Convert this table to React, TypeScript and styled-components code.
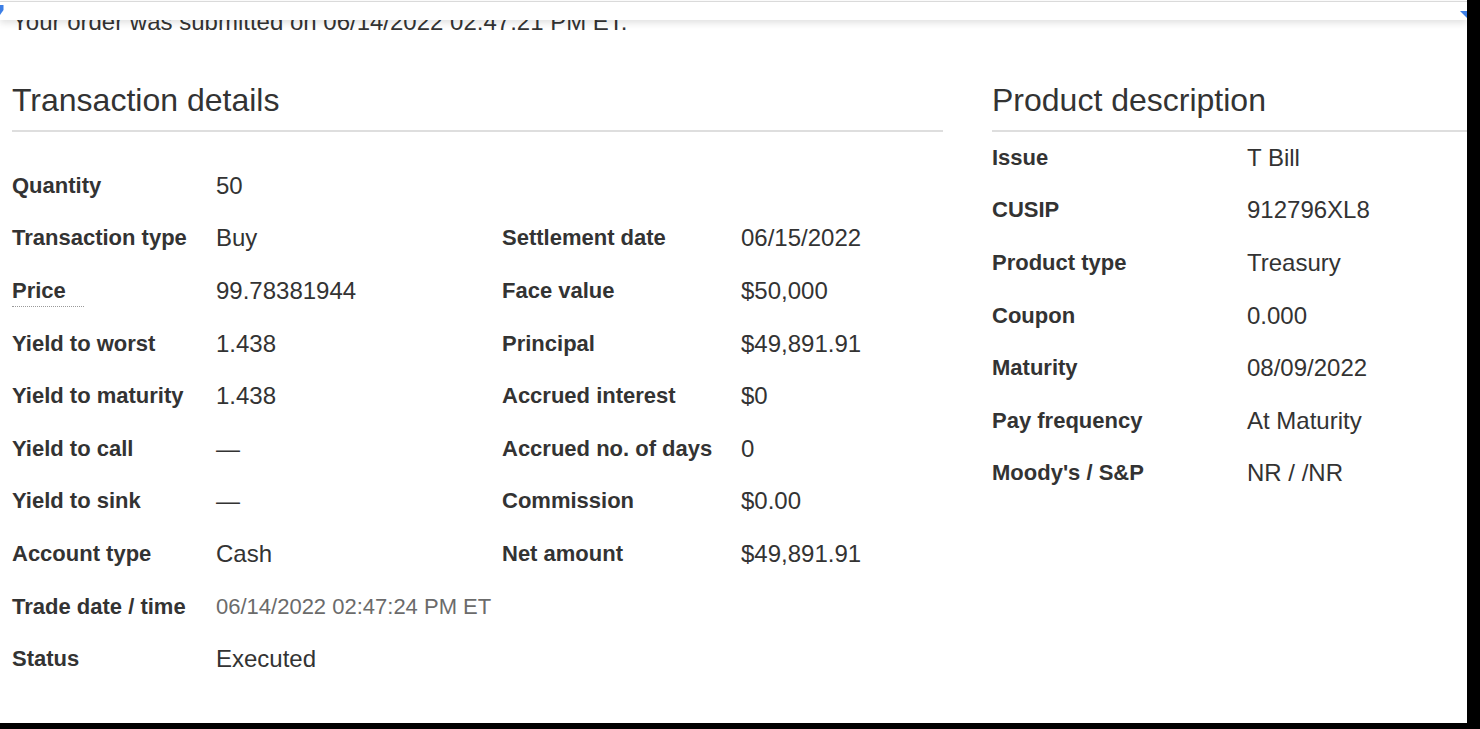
import React from "react";
import styled, { createGlobalStyle } from "styled-components";

const GlobalStyle = createGlobalStyle`
  html, body {
    margin: 0;
    padding: 0;
    background: #000;
  }
  body {
    font-family: "Liberation Sans", Arial, Helvetica, sans-serif;
    color: #333;
  }
`;

const Frame = styled.div`
  position: relative;
  width: 1467px;
  height: 723px;
  background: #fff;
  overflow: hidden;
`;

const TopBar = styled.div`
  position: absolute;
  top: 1px;
  left: 0;
  right: 0;
  height: 18px;
  background: #fff;
  border-top: 1px solid #dadada;
  box-shadow: 0 3px 7px rgba(0, 0, 0, 0.12);
  z-index: 2;
`;

const Marker = styled.svg<{ $side: "left" | "right" }>`
  position: absolute;
  ${(p) => (p.$side === "left" ? "left: 0; top: 3px;" : "right: 0; top: 9px;")}
`;

const Page = styled.div`
  padding: 8px 0 0 12px;
`;

const Intro = styled.p`
  margin: 0;
  font-size: 24px;
  line-height: 28px;
  color: #333;
`;

const Columns = styled.div`
  display: flex;
  gap: 49px;
  margin-top: 46px;
  align-items: flex-start;
`;

const Panel = styled.section<{ $width: number }>`
  width: ${(p) => p.$width}px;
  flex-shrink: 0;
`;

const Heading = styled.h2`
  margin: 0;
  font-size: 32px;
  line-height: 36px;
  font-weight: 400;
  color: #333;
  padding-bottom: 12px;
  border-bottom: 2px solid #dedede;
`;

const DetailGrid = styled.div<{ $cols: string; $offset: number }>`
  display: grid;
  grid-template-columns: ${(p) => p.$cols};
  grid-auto-rows: 52.6px;
  align-items: center;
  margin-top: ${(p) => p.$offset}px;
`;

const Label = styled.div<{ $tip?: boolean }>`
  font-size: 22px;
  line-height: 28.8px;
  font-weight: 700;
  color: #333;
  white-space: nowrap;
  span {
    ${(p) =>
      p.$tip
        ? "border-bottom: 1px dotted #9a9a9a; padding-right: 18px; padding-bottom: 3px;"
        : ""}
  }
`;

const Value = styled.div<{ $muted?: boolean }>`
  font-size: ${(p) => (p.$muted ? 22 : 24)}px;
  line-height: 28.8px;
  color: ${(p) => (p.$muted ? "#6b6b6b" : "#333")};
  white-space: nowrap;
`;

const Empty = styled.div``;

type Pair = [string, string, boolean?];

const leftA: Pair[] = [
  ["Quantity", "50"],
  ["Transaction type", "Buy"],
  ["Price", "99.78381944", true],
  ["Yield to worst", "1.438"],
  ["Yield to maturity", "1.438"],
  ["Yield to call", "—"],
  ["Yield to sink", "—"],
  ["Account type", "Cash"],
  ["Trade date / time", "06/14/2022 02:47:24 PM ET"],
  ["Status", "Executed"],
];

const leftB: (Pair | null)[] = [
  null,
  ["Settlement date", "06/15/2022"],
  ["Face value", "$50,000"],
  ["Principal", "$49,891.91"],
  ["Accrued interest", "$0"],
  ["Accrued no. of days", "0"],
  ["Commission", "$0.00"],
  ["Net amount", "$49,891.91"],
];

const product: Pair[] = [
  ["Issue", "T Bill"],
  ["CUSIP", "912796XL8"],
  ["Product type", "Treasury"],
  ["Coupon", "0.000"],
  ["Maturity", "08/09/2022"],
  ["Pay frequency", "At Maturity"],
  ["Moody's / S&P", "NR / /NR"],
];

export default function App() {
  const rows = leftA.map((a, i) => {
    const b = leftB[i];
    return (
      <React.Fragment key={a[0]}>
        <Label $tip={a[2]}>
          <span>{a[0]}</span>
        </Label>
        <Value $muted={a[0] === "Trade date / time"}>{a[1]}</Value>
        {b ? (
          <>
            <Label>
              <span>{b[0]}</span>
            </Label>
            <Value>{b[1]}</Value>
          </>
        ) : (
          <>
            <Empty />
            <Empty />
          </>
        )}
      </React.Fragment>
    );
  });

  return (
    <>
      <GlobalStyle />
      <Frame>
        <TopBar>
          <Marker $side="left" width="4" height="11" viewBox="0 0 4 11">
            <path d="M0 0H3.5V5L0 10Z" fill="#3d7fe6" />
          </Marker>
          <Marker $side="right" width="7" height="7" viewBox="0 0 7 7">
            <path d="M0 0H7V7Z" fill="#3d7fe6" />
          </Marker>
        </TopBar>
        <Page>
          <Intro>Your order was submitted on 06/14/2022 02:47:21 PM ET.</Intro>
          <Columns>
            <Panel $width={931}>
              <Heading>Transaction details</Heading>
              <DetailGrid $cols="204px 286px 239px 1fr" $offset={28}>
                {rows}
              </DetailGrid>
            </Panel>
            <Panel $width={520}>
              <Heading>Product description</Heading>
              <DetailGrid $cols="255px 1fr" $offset={0}>
                {product.map((p) => (
                  <React.Fragment key={p[0]}>
                    <Label>
                      <span>{p[0]}</span>
                    </Label>
                    <Value>{p[1]}</Value>
                  </React.Fragment>
                ))}
              </DetailGrid>
            </Panel>
          </Columns>
        </Page>
      </Frame>
    </>
  );
}
